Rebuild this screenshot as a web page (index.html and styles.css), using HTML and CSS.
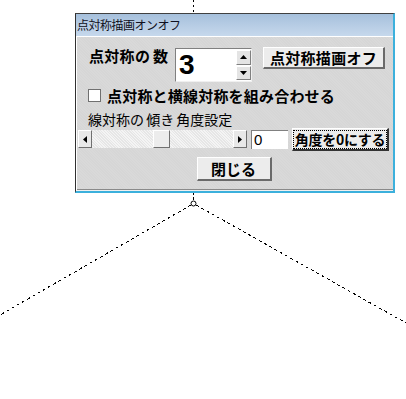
FILE: index.html
```html
<!DOCTYPE html>
<html lang="ja">
<head>
<meta charset="utf-8">
<link rel="stylesheet" href="styles.css">
</head>
<body>
<div class="canvas">
  <svg class="drawing" width="406" height="399" viewBox="0 0 406 399">
    <g stroke="#000" stroke-width="1" fill="none" shape-rendering="crispEdges">
      <line x1="193.5" y1="0" x2="193.5" y2="14" stroke-dasharray="2 3"/>
      <line x1="193.5" y1="192" x2="193.5" y2="201" stroke-dasharray="3 2"/>
      <line x1="191" y1="205" x2="0" y2="315" stroke-dasharray="3 3"/>
      <line x1="196" y1="205" x2="406" y2="323" stroke-dasharray="3 3"/>
    </g>
    <circle cx="193.5" cy="203.5" r="2.5" fill="none" stroke="#000" stroke-width="1"/>
  </svg>

  <div class="window">
    <div class="titlebar">点対称描画オンオフ</div>
    <div class="body">
      <div class="row row1">
        <span class="label-bold">点対称の 数</span>
        <div class="spin">
          <span class="spin-value">3</span>
          <div class="spin-btns">
            <div class="spin-btn"><svg width="7" height="4" viewBox="0 0 7 4"><path d="M3.5 0 L7 4 L0 4 Z" fill="#000"/></svg></div>
            <div class="spin-btn"><svg width="7" height="4" viewBox="0 0 7 4"><path d="M0 0 L7 0 L3.5 4 Z" fill="#000"/></svg></div>
          </div>
        </div>
        <div class="btn btn-off">点対称描画オフ</div>
      </div>
      <div class="row row2">
        <span class="checkbox"></span>
        <span class="label-bold">点対称と横線対称を組み合わせる</span>
      </div>
      <div class="row row3">
        <span class="label">線対称の 傾き 角度設定</span>
      </div>
      <div class="row row4">
        <div class="scrollbar">
          <div class="sb-btn"><svg width="4" height="7" viewBox="0 0 4 7"><path d="M4 0 L4 7 L0 3.5 Z" fill="#000"/></svg></div>
          <div class="sb-track">
            <div class="sb-thumb"></div>
          </div>
          <div class="sb-btn"><svg width="4" height="7" viewBox="0 0 4 7"><path d="M0 0 L4 3.5 L0 7 Z" fill="#000"/></svg></div>
        </div>
        <div class="textbox">0</div>
        <div class="btn btn-reset"><span class="focus">角度を0にする</span></div>
      </div>
      <div class="row row5">
        <div class="btn btn-close">閉じる</div>
      </div>
    </div>
  </div>
</div>
</body>
</html>
```
FILE: styles.css
```css
html, body {
  margin: 0;
  padding: 0;
  background: #fff;
}
body {
  font-family: "Noto Sans CJK JP", "Liberation Sans", sans-serif;
  color: #000;
}
.canvas {
  position: relative;
  width: 406px;
  height: 399px;
  overflow: hidden;
  background: #fff;
}
.drawing {
  position: absolute;
  left: 0;
  top: 0;
}
.window {
  position: absolute;
  left: 75px;
  top: 13px;
  width: 320px;
  height: 180px;
  box-sizing: border-box;
  border-left: 1px solid #303030;
  border-top: 1px solid #404040;
  border-right: 2px solid #3cb0dc;
  border-bottom: 2px solid #3cb0dc;
  background: #d6d6d6;
  display: flex;
  flex-direction: column;
}
.titlebar {
  height: 22px;
  line-height: 22px;
  font-size: 12px;
  padding-left: 1px;
  background: linear-gradient(#a6c0dc, #c6d8ec);
  border-bottom: 1px solid #fff;
  color: #101020;
  letter-spacing: -0.5px;
}
.body {
  flex: 1;
  display: flex;
  flex-direction: column;
  border-left: 1px solid #fff;
  border-bottom: 1px solid #f0f0f0;
  box-shadow: inset 0 -1px 0 #8a8a8a;
  background-color: #d6d6d6;
  background-image: repeating-linear-gradient(45deg, rgba(255,255,255,0.08) 0 1px, transparent 1px 2px);
}
.row {
  display: flex;
  align-items: flex-start;
}
.row1 {
  margin-top: 10px;
  height: 35px;
}
.label-bold {
  font-weight: bold;
  font-size: 15px;
  line-height: 16px;
  letter-spacing: 0.3px;
}
.row1 .label-bold {
  margin-left: 12px;
  margin-top: 1px;
  width: 86px;
  word-spacing: -1px;
}
.spin {
  margin-top: 1px;
  width: 77px;
  height: 34px;
  box-sizing: border-box;
  background: #fff;
  border-top: 1px solid #808080;
  border-left: 1px solid #808080;
  border-right: 1px solid #f0f0f0;
  border-bottom: 1px solid #f0f0f0;
  display: flex;
}
.spin-value {
  flex: 1;
  font-family: "Liberation Sans", sans-serif;
  font-weight: bold;
  font-size: 28px;
  line-height: 32px;
  padding-left: 3px;
}
.spin-btns {
  width: 15px;
  display: flex;
  flex-direction: column;
  gap: 1px;
  padding: 1px 0 1px 0;
}
.spin-btn {
  flex: 1;
  display: flex;
  align-items: center;
  justify-content: center;
  background: #e4e4e4;
  border-top: 1px solid #fff;
  border-left: 1px solid #fff;
  border-right: 1px solid #808080;
  border-bottom: 1px solid #808080;
}
.btn {
  box-sizing: border-box;
  display: flex;
  align-items: center;
  justify-content: center;
  background: #ececec;
  border-top: 1px solid #fff;
  border-left: 1px solid #fff;
  border-right: 2px solid #6a6a6a;
  border-bottom: 2px solid #6a6a6a;
  font-weight: bold;
}
.btn-off {
  margin-left: 11px;
  width: 122px;
  height: 22px;
  font-size: 15px;
  letter-spacing: 0.3px;
}
.row2 {
  margin-top: 6px;
  height: 15px;
  align-items: center;
}
.checkbox {
  width: 11px;
  height: 11px;
  margin-left: 11px;
  margin-right: 6px;
  background: #fff;
  border: 1px solid #707070;
}
.row2 .label-bold {
  letter-spacing: 0.2px;
}
.row3 {
  margin-top: 8px;
  height: 17px;
}
.label {
  margin-left: 11px;
  font-size: 14px;
  line-height: 17px;
  word-spacing: -1px;
}
.row4 {
  height: 23px;
}
.scrollbar {
  margin-top: 2px;
  margin-left: 1px;
  width: 169px;
  height: 18px;
  display: flex;
}
.sb-btn {
  width: 14px;
  box-sizing: border-box;
  display: flex;
  align-items: center;
  justify-content: center;
  background: #e8e8e8;
  border-top: 1px solid #fff;
  border-left: 1px solid #fff;
  border-right: 1px solid #707070;
  border-bottom: 1px solid #707070;
}
.sb-track {
  flex: 1;
  position: relative;
  background-color: #f4f4f4;
  background-image: repeating-linear-gradient(45deg, #e6e6e6 0 1px, transparent 1px 2px);
}
.sb-thumb {
  position: absolute;
  left: 61px;
  top: 0;
  width: 17px;
  height: 18px;
  box-sizing: border-box;
  background: #ececec;
  border-top: 1px solid #fff;
  border-left: 1px solid #fff;
  border-right: 1px solid #707070;
  border-bottom: 1px solid #707070;
}
.textbox {
  margin-top: 2px;
  margin-left: 4px;
  width: 37px;
  height: 19px;
  box-sizing: border-box;
  background: #fff;
  border-top: 1px solid #808080;
  border-left: 1px solid #808080;
  font-family: "Liberation Sans", sans-serif;
  font-size: 15px;
  line-height: 18px;
  padding-left: 2px;
}
.btn-reset {
  margin-left: 4px;
  width: 97px;
  height: 23px;
  border-right: 2px solid #333;
  border-bottom: 2px solid #333;
  font-size: 14px;
  font-weight: 600;
}
.focus {
  outline: 1px dotted #000;
  outline-offset: 0;
  line-height: 17px;
  padding: 0 1px;
  letter-spacing: -0.3px;
}
.row5 {
  margin-top: 6px;
  justify-content: center;
}
.btn-close {
  width: 75px;
  height: 24px;
  font-size: 15px;
  margin-left: -2px;
}
```
